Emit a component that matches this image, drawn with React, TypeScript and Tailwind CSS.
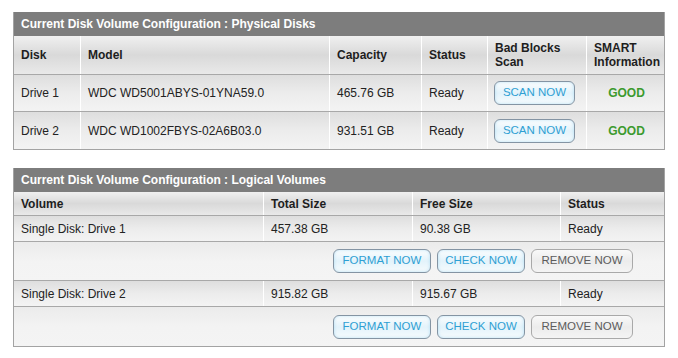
const font = { fontFamily: '"Liberation Sans", Arial, sans-serif' };

function BlueButton({ label, w }: { label: string; w: string }) {
  return (
    <button
      className={`${w} h-[24px] rounded-[6px] border border-[#8494a3] bg-gradient-to-b from-[#fbfdfe] via-[#e3f3fb] to-[#f6fbfd] text-[11.5px] leading-none text-[#2f9fd3] shadow-[inset_0_0_3px_rgba(120,200,240,0.5)]`}
    >
      {label}
    </button>
  );
}

function GrayButton({ label, w }: { label: string; w: string }) {
  return (
    <button
      className={`${w} h-[24px] rounded-[6px] border border-[#a9a9a9] bg-gradient-to-b from-[#f9f9f9] via-[#ececec] to-[#f4f4f4] text-[11.5px] leading-none text-[#5c5c5c]`}
    >
      {label}
    </button>
  );
}

const head = "bg-gradient-to-b from-[#f0f0f0] via-[#d9d9d9] to-[#e9e9e9]";
const row = "bg-gradient-to-b from-[#dedede] via-[#ececec] to-[#f3f3f3]";
const cell = "flex items-center px-[7px] border-r border-white last:border-r-0";

function PhysicalDisks() {
  const cols = "grid grid-cols-[67px_249px_92px_66px_99px_79px]";
  const drives = [
    ["Drive 1", "WDC WD5001ABYS-01YNA59.0", "465.76 GB"],
    ["Drive 2", "WDC WD1002FBYS-02A6B03.0", "931.51 GB"],
  ];
  return (
    <div className="w-[652px] border-x border-b border-[#a3a3a3]">
      <div className="h-[24px] bg-[#7d7d7d] px-[7px] flex items-center text-[12px] font-bold text-white">
        Current Disk Volume Configuration : Physical Disks
      </div>
      <div className={`${cols} h-[39px] ${head} border-b border-[#a8a8a8] text-[12px] font-bold text-[#1e1e1e] leading-[14px]`}>
        <div className={cell}>Disk</div>
        <div className={cell}>Model</div>
        <div className={cell}>Capacity</div>
        <div className={cell}>Status</div>
        <div className={cell}>Bad Blocks<br />Scan</div>
        <div className={cell}>SMART<br />Information</div>
      </div>
      {drives.map((d, i) => (
        <div
          key={i}
          className={`${cols} h-[37px] ${row} ${i === 0 ? "border-b border-[#a8a8a8]" : ""} text-[12px] text-[#222]`}
        >
          <div className={cell}>{d[0]}</div>
          <div className={cell}>{d[1]}</div>
          <div className={cell}>{d[2]}</div>
          <div className={cell}>Ready</div>
          <div className={`${cell} !px-[6px]`}>
            <BlueButton label="SCAN NOW" w="w-[81px]" />
          </div>
          <div className={`${cell} justify-center font-bold text-[#3c9a2e]`}>GOOD</div>
        </div>
      ))}
    </div>
  );
}

function LogicalVolumes() {
  const cols = "grid grid-cols-[250px_149px_148px_103px]";
  const vols = [
    ["Single Disk: Drive 1", "457.38 GB", "90.38 GB"],
    ["Single Disk: Drive 2", "915.82 GB", "915.67 GB"],
  ];
  return (
    <div className="w-[652px] border-x border-b border-[#a3a3a3]">
      <div className="h-[24px] bg-[#7d7d7d] px-[7px] flex items-center text-[12px] font-bold text-white">
        Current Disk Volume Configuration : Logical Volumes
      </div>
      <div className={`${cols} h-[24px] ${head} border-b border-[#a8a8a8] text-[12px] font-bold text-[#1e1e1e]`}>
        <div className={cell}>Volume</div>
        <div className={cell}>Total Size</div>
        <div className={cell}>Free Size</div>
        <div className={cell}>Status</div>
      </div>
      {vols.map((v, i) => (
        <div key={i}>
          <div className={`${cols} h-[26px] ${row} border-b border-[#a8a8a8] text-[12px] text-[#222]`}>
            <div className={cell}>{v[0]}</div>
            <div className={cell}>{v[1]}</div>
            <div className={cell}>{v[2]}</div>
            <div className={cell}>Ready</div>
          </div>
          <div
            className={`h-[39px] flex items-center justify-end gap-[6px] pr-[31px] bg-gradient-to-b from-[#ebebeb] via-[#f3f3f3] to-[#f4f4f4] ${i === 0 ? "border-b border-[#a8a8a8]" : ""}`}
          >
            <BlueButton label="FORMAT NOW" w="w-[98px]" />
            <BlueButton label="CHECK NOW" w="w-[88px]" />
            <GrayButton label="REMOVE NOW" w="w-[102px]" />
          </div>
        </div>
      ))}
    </div>
  );
}

export default function App() {
  return (
    <div className="w-[678px] h-[358px] bg-white pt-[12px] pl-[13px]" style={font}>
      <PhysicalDisks />
      <div className="h-[18px]" />
      <LogicalVolumes />
    </div>
  );
}
